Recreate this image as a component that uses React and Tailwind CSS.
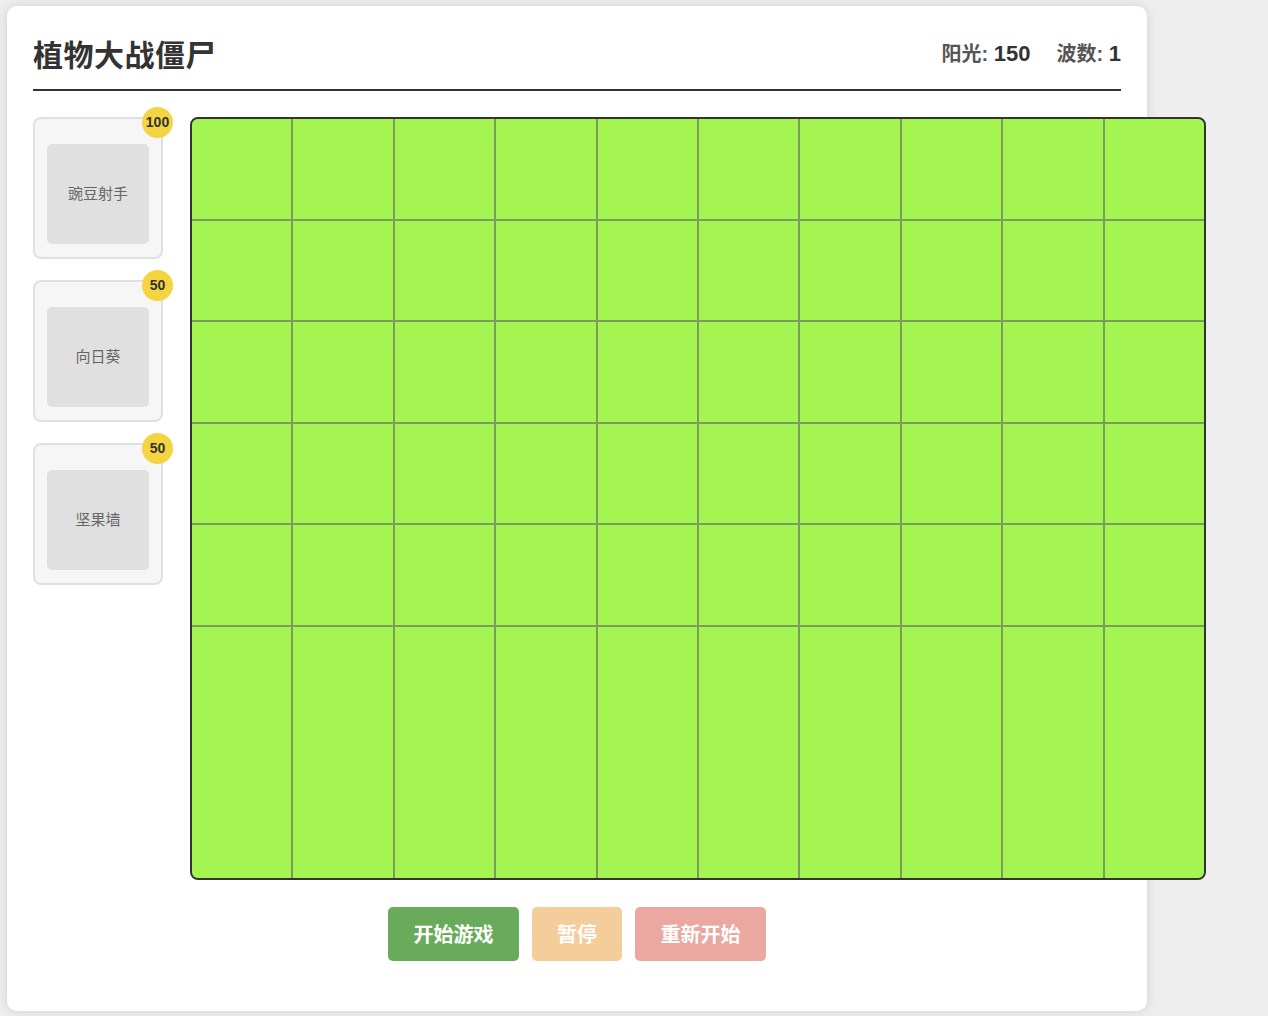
const plants = [
  { name: '豌豆射手', cost: 100 },
  { name: '向日葵', cost: 50 },
  { name: '坚果墙', cost: 50 },
]

const cells = Array.from({ length: 60 })

export default function App() {
  return (
    <div
      className="min-h-[1016px] bg-[#eeeeee] pt-[6px] pl-[7px]"
      style={{ fontFamily: '"Liberation Sans", "Noto Sans CJK SC", sans-serif' }}
    >
      <div className="w-[1140px] h-[1005px] bg-white rounded-[10px] shadow-[0_0_12px_rgba(0,0,0,0.12)] px-[26px] pt-[30px]">
        <div className="flex items-end justify-between border-b-2 border-[#333] pb-[13px]">
          <h1 className="text-[30px] font-bold text-[#333] leading-[40px] tracking-[0.5px]">植物大战僵尸</h1>
          <div className="flex items-baseline gap-[26px] pb-[6px]">
            <div className="text-[20px] font-bold text-[#555]">
              阳光: <span className="text-[22px] text-[#333]">150</span>
            </div>
            <div className="text-[20px] font-bold text-[#555]">
              波数: <span className="text-[22px] text-[#333]">1</span>
            </div>
          </div>
        </div>

        <div className="flex gap-[27px] mt-[26px]">
          <div className="w-[130px] shrink-0 flex flex-col gap-[21px]">
            {plants.map((p) => (
              <div
                key={p.name}
                className="relative h-[142px] bg-[#f6f6f6] border-2 border-[#e0e0e0] rounded-[8px] pt-[25px] px-[12px]"
              >
                <div className="h-[100px] bg-[#e0e0e0] rounded-[5px] flex items-center justify-center text-[15px] text-[#666]">
                  {p.name}
                </div>
                <div className="absolute -top-[12px] -right-[12px] w-[31px] h-[31px] rounded-full bg-[#f5d442] flex items-center justify-center text-[14px] font-bold text-[#333]">
                  {p.cost}
                </div>
              </div>
            ))}
          </div>

          <div className="shrink-0 w-[1016px] h-[763px] border-2 border-[#333] rounded-[8px] overflow-hidden bg-[#7c9c5e] grid grid-cols-10 gap-[2px] grid-rows-[repeat(5,99.6px)_1fr]">
            {cells.map((_, i) => (
              <div key={i} className="bg-[#a5f552]" />
            ))}
          </div>
        </div>

        <div className="flex justify-center gap-[13px] mt-[27px]">
          <button className="w-[131px] h-[54px] rounded-[5px] bg-[#6aab5b] text-white text-[20px] font-bold pt-[2px]">
            开始游戏
          </button>
          <button className="w-[90px] h-[54px] rounded-[5px] bg-[#f5cd9b] text-white text-[20px] font-bold pt-[2px]">
            暂停
          </button>
          <button className="w-[131px] h-[54px] rounded-[5px] bg-[#eba8a0] text-white text-[20px] font-bold pt-[2px]">
            重新开始
          </button>
        </div>
      </div>
    </div>
  )
}
